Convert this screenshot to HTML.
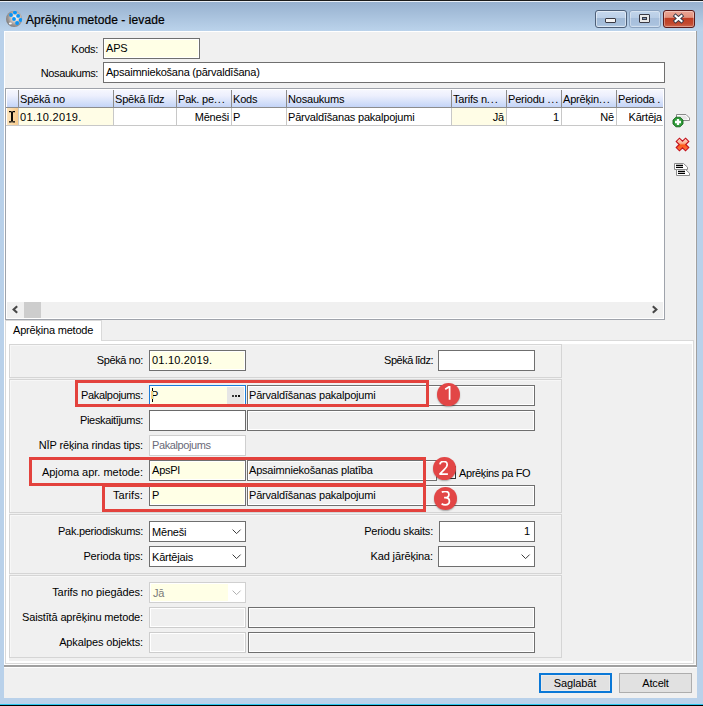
<!DOCTYPE html>
<html><head><meta charset="utf-8"><style>
*{margin:0;padding:0;box-sizing:border-box}
html,body{width:703px;height:706px;overflow:hidden}
body{position:relative;background:#b9d1ea;font-family:"Liberation Sans",sans-serif;font-size:11px;color:#000}
.a{position:absolute}
.t{position:absolute;white-space:pre;line-height:1}
</style></head><body>
<div class="a" style="left:0px;top:0px;width:703px;height:1px;background:#1a1a1a"></div>
<div class="a" style="left:0px;top:1px;width:703px;height:1px;background:#e9eff6"></div>
<div class="a" style="left:0px;top:2px;width:703px;height:29px;background:linear-gradient(#97b1cf,#bbd3eb)"></div>
<div class="a" style="left:0px;top:704px;width:703px;height:1px;background:#2cc6ee"></div>
<div class="a" style="left:0px;top:705px;width:703px;height:1px;background:#000"></div>
<svg class="a" style="left:6px;top:11px" width="17" height="17" viewBox="0 0 17 17">
<defs><radialGradient id="sg" cx="0.58" cy="0.42" r="0.62"><stop offset="0" stop-color="#ffffff"/><stop offset="0.35" stop-color="#ddd2cc"/><stop offset="0.7" stop-color="#a09a98"/><stop offset="1" stop-color="#7c7a7a"/></radialGradient>
<clipPath id="sc"><circle cx="8.1" cy="7.9" r="8.1"/></clipPath></defs>
<circle cx="8.1" cy="7.9" r="8.1" fill="url(#sg)"/>
<g fill="#0a94f6" clip-path="url(#sc)">
<circle cx="9" cy="1.6" r="1.95"/><circle cx="5" cy="4" r="1.95"/><circle cx="12.1" cy="4.9" r="1.95"/>
<circle cx="8" cy="8" r="1.95"/><circle cx="14.7" cy="9" r="1.95"/><circle cx="11.1" cy="12" r="1.95"/>
</g>
<ellipse cx="4.3" cy="12.4" rx="1.5" ry="1" fill="#fff" opacity="0.95"/>
</svg>
<div class="t" style="left:26px;top:13.84px;font-size:12px;letter-spacing:0.08px;color:#000;-webkit-text-stroke:0.2px #000">Aprēķinu metode - ievade</div>
<div class="a" style="left:595px;top:10px;width:32px;height:18px;border:1px solid #4d5f78;border-radius:3px;background:linear-gradient(#c6d8ee 0,#bcd0e8 41%,#a0b9d6 44%,#a6bfdb 85%,#bcd1e9 100%);box-shadow:inset 0 0 0 1px rgba(255,255,255,0.5)"></div>
<div class="a" style="left:629px;top:10px;width:32px;height:18px;border:1px solid #8ba2bf;border-radius:3px;background:linear-gradient(#c2d5eb 0,#b8cde6 41%,#a6bedb 44%,#aac2de 85%,#bdd2ea 100%);box-shadow:inset 0 0 0 1px rgba(255,255,255,0.35)"></div>
<div class="a" style="left:663px;top:10px;width:32px;height:18px;border:1px solid #5a1a1a;border-radius:3px;background:linear-gradient(#eba594 0,#e3937f 40%,#bf3c22 44%,#c24a30 80%,#d06a52 100%);box-shadow:inset 0 0 0 1px rgba(255,255,255,0.35)"></div>
<div class="a" style="left:605px;top:18px;width:11px;height:5px;background:#f4f4f4;border:1px solid #3a3a44;border-radius:1px"></div>
<div class="a" style="left:639px;top:14px;width:11px;height:9px;background:#e8e8e8;border:1px solid #3a3a44;border-radius:1px"></div>
<div class="a" style="left:642px;top:17px;width:5px;height:3px;background:#7d94b4;border:1px solid #3a3a44"></div>
<svg class="a" style="left:672px;top:13px" width="13" height="11" viewBox="0 0 13 11">
<path d="M3.6 3 L9.4 8 M9.4 3 L3.6 8" stroke="#3a3a48" stroke-width="4" stroke-linecap="square"/>
<path d="M3.6 3 L9.4 8 M9.4 3 L3.6 8" stroke="#fff" stroke-width="2.2" stroke-linecap="square"/>
</svg>
<div class="a" style="left:4px;top:31px;width:693px;height:667px;background:#f0f0f0"></div>
<div class="a" style="left:4px;top:31px;width:693px;height:1px;background:#fff"></div>
<div class="a" style="left:4px;top:31px;width:1px;height:636px;background:#fff"></div>
<div class="a" style="left:696px;top:31px;width:1px;height:636px;background:#a0a0a0"></div>
<div class="a" style="left:695px;top:32px;width:1px;height:633px;background:#f6f6f6"></div>
<div class="a" style="left:4px;top:665px;width:693px;height:2px;background:#a0a0a0"></div>
<div class="a" style="left:5px;top:664px;width:691px;height:1px;background:#fff"></div>
<div class="a" style="left:4px;top:667px;width:693px;height:1px;background:#fff"></div>
<div class="t" style="right:605px;top:43.69px;font-size:11px;letter-spacing:-0.3px;">Kods:</div>
<div class="t" style="right:605px;top:67.69px;font-size:11px;letter-spacing:-0.39px;">Nosaukums:</div>
<div class="a" style="left:103px;top:38px;width:97px;height:21px;border:1px solid #6f6f6f;background:#ffffe6;box-shadow:inset 0 0 0 1px #fff;"></div>
<div class="t" style="left:106px;top:42.69px;font-size:11px;letter-spacing:-0.2px;">APS</div>
<div class="a" style="left:103px;top:62px;width:562px;height:21px;border:1px solid #6f6f6f;background:#fff;box-shadow:inset 0 0 0 1px #fff;"></div>
<div class="t" style="left:106px;top:66.69px;font-size:11px;letter-spacing:-0.22px;">Apsaimniekošana (pārvaldīšana)</div>
<div class="a" style="left:5px;top:88px;width:660px;height:232px;background:#fff;border:1px solid #9fa3ab"></div>
<div class="a" style="left:7px;top:90px;width:656px;height:17px;background:linear-gradient(#f6f7fe 0%,#eceffd 35%,#d6e1fa 70%,#c4d4f7 100%)"></div>
<div class="a" style="left:6px;top:107px;width:657px;height:1px;background:#8c8c8c"></div>
<div class="a" style="left:7px;top:108px;width:11px;height:17px;background:linear-gradient(90deg,#fde6bf,#f7c98a)"></div>
<div class="a" style="left:6px;top:125px;width:657px;height:1px;background:#c8c8c8"></div>
<div class="a" style="left:18px;top:90px;width:1px;height:17px;background:#8c8c8c"></div>
<div class="a" style="left:18px;top:108px;width:1px;height:17px;background:#c8c8c8"></div>
<div class="a" style="left:113px;top:90px;width:1px;height:17px;background:#8c8c8c"></div>
<div class="a" style="left:113px;top:108px;width:1px;height:17px;background:#c8c8c8"></div>
<div class="a" style="left:176px;top:90px;width:1px;height:17px;background:#8c8c8c"></div>
<div class="a" style="left:176px;top:108px;width:1px;height:17px;background:#c8c8c8"></div>
<div class="a" style="left:231px;top:90px;width:1px;height:17px;background:#8c8c8c"></div>
<div class="a" style="left:231px;top:108px;width:1px;height:17px;background:#c8c8c8"></div>
<div class="a" style="left:286px;top:90px;width:1px;height:17px;background:#8c8c8c"></div>
<div class="a" style="left:286px;top:108px;width:1px;height:17px;background:#c8c8c8"></div>
<div class="a" style="left:451px;top:90px;width:1px;height:17px;background:#8c8c8c"></div>
<div class="a" style="left:451px;top:108px;width:1px;height:17px;background:#c8c8c8"></div>
<div class="a" style="left:506px;top:90px;width:1px;height:17px;background:#8c8c8c"></div>
<div class="a" style="left:506px;top:108px;width:1px;height:17px;background:#c8c8c8"></div>
<div class="a" style="left:561px;top:90px;width:1px;height:17px;background:#8c8c8c"></div>
<div class="a" style="left:561px;top:108px;width:1px;height:17px;background:#c8c8c8"></div>
<div class="a" style="left:616px;top:90px;width:1px;height:17px;background:#8c8c8c"></div>
<div class="a" style="left:616px;top:108px;width:1px;height:17px;background:#c8c8c8"></div>
<div class="a" style="left:19px;top:108px;width:94px;height:17px;background:#fffde6"></div>
<div class="a" style="left:452px;top:108px;width:54px;height:17px;background:#fffde6"></div>
<div class="t" style="left:20px;top:93.69px;font-size:11px;letter-spacing:-0.2px;">Spēkā no</div>
<div class="t" style="left:115px;top:93.69px;font-size:11px;letter-spacing:-0.2px;">Spēkā līdz</div>
<div class="t" style="left:178px;top:93.69px;font-size:11px;letter-spacing:-0.2px;">Pak. pe<span style="letter-spacing:0.9px">...</span></div>
<div class="t" style="left:233px;top:93.69px;font-size:11px;letter-spacing:-0.2px;">Kods</div>
<div class="t" style="left:288px;top:93.69px;font-size:11px;letter-spacing:-0.2px;">Nosaukums</div>
<div class="t" style="left:453px;top:93.69px;font-size:11px;letter-spacing:-0.2px;">Tarifs n<span style="letter-spacing:0.9px">...</span></div>
<div class="t" style="left:508px;top:93.69px;font-size:11px;letter-spacing:-0.2px;">Periodu <span style="letter-spacing:0.9px">...</span></div>
<div class="t" style="left:563px;top:93.69px;font-size:11px;letter-spacing:-0.2px;">Aprēķin<span style="letter-spacing:0.9px">...</span></div>
<div class="t" style="left:618px;top:93.69px;font-size:11px;letter-spacing:-0.2px;">Perioda .</div>
<div class="t" style="left:20px;top:111.69px;font-size:11px;letter-spacing:0.32px;">01.10.2019.</div>
<div class="t" style="right:474px;top:111.69px;font-size:11px;letter-spacing:-0.2px;">Mēneši</div>
<div class="t" style="left:233px;top:111.69px;font-size:11px;letter-spacing:-0.2px;">P</div>
<div class="t" style="left:288px;top:111.69px;font-size:11px;letter-spacing:-0.2px;">Pārvaldīšanas pakalpojumi</div>
<div class="t" style="right:199px;top:111.69px;font-size:11px;letter-spacing:-0.2px;">Jā</div>
<div class="t" style="right:144px;top:111.69px;font-size:11px;letter-spacing:-0.2px;">1</div>
<div class="t" style="right:89px;top:111.69px;font-size:11px;letter-spacing:-0.2px;">Nē</div>
<div class="t" style="right:41px;top:111.69px;font-size:11px;letter-spacing:-0.2px;overflow:hidden">Kārtēja</div>
<svg class="a" style="left:8px;top:110px" width="9" height="14" viewBox="0 0 9 14">
<path d="M1 1.6 H3.6 M4.4 1.6 H7 M1 11.9 H3.6 M4.4 11.9 H7" stroke="#000" stroke-width="1.1" fill="none"/>
<path d="M4 2 V11.5" stroke="#000" stroke-width="1.9" fill="none"/></svg>
<div class="a" style="left:7px;top:302px;width:656px;height:16px;background:#f0f0f0"></div>
<div class="a" style="left:24px;top:302px;width:17px;height:16px;background:#cdcdcd"></div>
<svg class="a" style="left:11px;top:305px" width="9" height="9" viewBox="0 0 9 9"><path d="M6.2 1.2 L2.6 4.5 L6.2 7.8" stroke="#474747" stroke-width="2.1" fill="none"/></svg>
<svg class="a" style="left:650px;top:305px" width="9" height="9" viewBox="0 0 9 9"><path d="M2.8 1.2 L6.4 4.5 L2.8 7.8" stroke="#474747" stroke-width="2.1" fill="none"/></svg>
<svg class="a" style="left:672px;top:112px" width="20" height="16" viewBox="0 0 20 16">
<path d="M4.5 2.5 H14 L17.5 6 V8.5 H4.5 Z" fill="#fff" stroke="#8a8a8a"/>
<path d="M8 3.5 H13 L15.5 6 V7.5 H8 Z" fill="#e6e6e6"/>
<path d="M3.9 5.2 H8.1 L11 8.1 V11.9 L8.1 14.8 H3.9 L1 11.9 V8.1 Z" fill="#2e9a38" stroke="#17661e" stroke-width="0.9"/>
<path d="M6 7 V13 M3 10 H9" stroke="#fff" stroke-width="2.3"/>
</svg>
<svg class="a" style="left:674.7px;top:137px" width="15" height="15" viewBox="0 0 15 15">
<defs><linearGradient id="xg" gradientUnits="userSpaceOnUse" x1="7.5" y1="1" x2="7.5" y2="14" gradientTransform="rotate(-45 7.5 7.5)"><stop offset="0" stop-color="#ffe4d8"/><stop offset="0.4" stop-color="#fcb090"/><stop offset="0.55" stop-color="#ff5a14"/><stop offset="1" stop-color="#f87a50"/></linearGradient></defs>
<g transform="rotate(45 7.5 7.5)"><path d="M5.2 0.9 H9.8 V5.2 H14.1 V9.8 H9.8 V14.1 H5.2 V9.8 H0.9 V5.2 H5.2 Z" fill="url(#xg)" stroke="#c4101a" stroke-width="1.1" stroke-linejoin="miter"/></g>
</svg>
<svg class="a" style="left:673px;top:162px" width="18" height="15" viewBox="0 0 18 15">
<path d="M1.5 1.5 H10.5 L14.5 5.2 V7.5 H1.5 Z" fill="#fff" stroke="#8a8a8a"/>
<path d="M3 3.4 H10 M3 5.4 H10" stroke="#000" stroke-width="1.2"/>
<path d="M3.5 7.5 H12.5 L16.5 11.2 V13.5 H3.5 Z" fill="#fff" stroke="#8a8a8a"/>
<path d="M5 9.4 H12 M5 11.4 H12" stroke="#000" stroke-width="1.2"/>
</svg>
<div class="a" style="left:5px;top:320px;width:97px;height:21px;background:#fff;border:1px solid #d9d9d9;border-bottom:none"></div>
<div class="t" style="left:13px;top:324.69px;font-size:11px;letter-spacing:-0.2px;">Aprēķina metode</div>
<div class="a" style="left:5px;top:340px;width:689px;height:324px;background:#fff;border:1px solid #d9d9d9"></div>
<div class="a" style="left:9px;top:344px;width:683px;height:317px;background:#f0f0f0"></div>
<div class="a" style="left:6px;top:340px;width:95px;height:1px;background:#fff"></div>
<div class="a" style="left:9px;top:344px;width:553px;height:34px;border:1px solid #d5d5d5;box-shadow:inset 1px 1px 0 #f7f7f7"></div>
<div class="a" style="left:9px;top:379px;width:553px;height:134px;border:1px solid #d5d5d5;box-shadow:inset 1px 1px 0 #f7f7f7"></div>
<div class="a" style="left:9px;top:514px;width:553px;height:60px;border:1px solid #d5d5d5;box-shadow:inset 1px 1px 0 #f7f7f7"></div>
<div class="a" style="left:9px;top:575px;width:553px;height:83px;border:1px solid #d5d5d5;box-shadow:inset 1px 1px 0 #f7f7f7"></div>
<div class="t" style="right:560px;top:354.69px;font-size:11px;letter-spacing:-0.37px;">Spēkā no:</div>
<div class="a" style="left:149px;top:350px;width:97px;height:21px;border:1px solid #6f6f6f;background:#ffffe6;box-shadow:inset 0 0 0 1px #fff;"></div>
<div class="t" style="left:152px;top:354.69px;font-size:11px;letter-spacing:0.2px;">01.10.2019.</div>
<div class="t" style="right:270px;top:354.69px;font-size:11px;letter-spacing:-0.5px;">Spēkā līdz:</div>
<div class="a" style="left:438px;top:350px;width:97px;height:21px;border:1px solid #6f6f6f;background:#fff;box-shadow:inset 0 0 0 1px #fff;"></div>
<div class="t" style="right:560px;top:389.69px;font-size:11px;letter-spacing:-0.34px;">Pakalpojums:</div>
<div class="a" style="left:149px;top:385px;width:97px;height:21px;border:1px solid #1a7ad8;background:#ffffe6;box-shadow:inset 0 0 0 1px #fff;"></div>
<div class="a" style="left:227px;top:387px;width:17px;height:17px;background:#e6e6e6"></div>
<div class="a" style="left:232px;top:395px;width:2px;height:2px;background:#3a3a3a"></div>
<div class="a" style="left:235px;top:395px;width:2px;height:2px;background:#2a2a2a"></div>
<div class="a" style="left:238px;top:395px;width:2px;height:2px;background:#111"></div>
<div class="a" style="left:247px;top:385px;width:288px;height:21px;border:1px solid #6f6f6f;background:#f0f0f0;box-shadow:inset 0 0 0 1px #fff;"></div>
<div class="t" style="left:249px;top:389.69px;font-size:11px;letter-spacing:-0.2px;">Pārvaldīšanas pakalpojumi</div>
<div class="t" style="left:151px;top:389.69px;font-size:11px;letter-spacing:-0.2px;">P</div>
<div class="a" style="left:152px;top:388px;width:1px;height:3px;background:#000"></div>
<div class="a" style="left:152px;top:391px;width:1px;height:8px;background:#f3cf78"></div>
<div class="a" style="left:152px;top:399px;width:1px;height:3px;background:#000"></div>
<div class="t" style="right:560px;top:414.69px;font-size:11px;letter-spacing:-0.35px;">Pieskaitījums:</div>
<div class="a" style="left:149px;top:410px;width:97px;height:21px;border:1px solid #6a6a6a;background:#fff;box-shadow:inset 0 0 0 1px #fff;"></div>
<div class="a" style="left:247px;top:410px;width:288px;height:21px;border:1px solid #6f6f6f;background:#f0f0f0;box-shadow:inset 0 0 0 1px #fff;"></div>
<div class="t" style="right:560px;top:439.69px;font-size:11px;letter-spacing:-0.14px;">NĪP rēķina rindas tips:</div>
<div class="a" style="left:149px;top:435px;width:97px;height:21px;border:1px solid #cfcfcf;background:#fff;box-shadow:inset 0 0 0 1px #fff;"></div>
<div class="t" style="left:152px;top:439.69px;font-size:11px;letter-spacing:-0.4px;color:#6a6a78">Pakalpojums</div>
<div class="t" style="right:560px;top:466.69px;font-size:11px;letter-spacing:-0.02px;">Apjoma apr. metode:</div>
<div class="a" style="left:149px;top:460px;width:97px;height:21px;border:1px solid #6f6f6f;background:#ffffe6;box-shadow:inset 0 0 0 1px #fff;"></div>
<div class="t" style="left:152px;top:464.69px;font-size:11px;letter-spacing:-0.2px;">ApsPl</div>
<div class="a" style="left:247px;top:460px;width:190px;height:21px;border:1px solid #6f6f6f;background:#f0f0f0;box-shadow:inset 0 0 0 1px #fff;"></div>
<div class="t" style="left:249px;top:464.69px;font-size:11px;letter-spacing:-0.2px;">Apsaimniekošanas platība</div>
<div class="a" style="left:443px;top:466px;width:13px;height:13px;border:1px solid #333;background:#fff"></div>
<div class="t" style="left:459px;top:467.69px;font-size:11px;letter-spacing:-0.37px;">Aprēķins pa FO</div>
<div class="t" style="right:560px;top:489.69px;font-size:11px;letter-spacing:0.1px;">Tarifs:</div>
<div class="a" style="left:149px;top:485px;width:97px;height:21px;border:1px solid #6f6f6f;background:#ffffe6;box-shadow:inset 0 0 0 1px #fff;"></div>
<div class="t" style="left:152px;top:489.69px;font-size:11px;letter-spacing:-0.2px;">P</div>
<div class="a" style="left:247px;top:485px;width:288px;height:21px;border:1px solid #6f6f6f;background:#f0f0f0;box-shadow:inset 0 0 0 1px #fff;"></div>
<div class="t" style="left:249px;top:489.69px;font-size:11px;letter-spacing:-0.2px;">Pārvaldīšanas pakalpojumi</div>
<div class="t" style="right:560px;top:525.69px;font-size:11px;letter-spacing:-0.29px;">Pak.periodiskums:</div>
<div class="a" style="left:149px;top:521px;width:97px;height:21px;border:1px solid #6f6f6f;background:#fff;box-shadow:inset 0 0 0 1px #fff;"></div>
<div class="t" style="left:152px;top:526.69px;font-size:11px;letter-spacing:-0.2px;">Mēneši</div>
<svg class="a" style="left:232px;top:529px" width="10" height="6" viewBox="0 0 10 6"><path d="M0.6 0.6 L4.6 4.6 L8.6 0.6" stroke="#3a3a3a" stroke-width="1" fill="none"/></svg>
<div class="t" style="right:270px;top:525.69px;font-size:11px;letter-spacing:-0.22px;">Periodu skaits:</div>
<div class="a" style="left:439px;top:521px;width:96px;height:21px;border:1px solid #6f6f6f;background:#fff;box-shadow:inset 0 0 0 1px #fff;"></div>
<div class="t" style="right:173px;top:525.69px;font-size:11px;letter-spacing:-0.2px;">1</div>
<div class="t" style="right:560px;top:550.69px;font-size:11px;letter-spacing:-0.12px;">Perioda tips:</div>
<div class="a" style="left:149px;top:546px;width:97px;height:21px;border:1px solid #6f6f6f;background:#fff;box-shadow:inset 0 0 0 1px #fff;"></div>
<div class="t" style="left:152px;top:551.69px;font-size:11px;letter-spacing:-0.2px;">Kārtējais</div>
<svg class="a" style="left:232px;top:554px" width="10" height="6" viewBox="0 0 10 6"><path d="M0.6 0.6 L4.6 4.6 L8.6 0.6" stroke="#3a3a3a" stroke-width="1" fill="none"/></svg>
<div class="t" style="right:270px;top:550.69px;font-size:11px;letter-spacing:-0.13px;">Kad jārēķina:</div>
<div class="a" style="left:438px;top:546px;width:97px;height:21px;border:1px solid #6f6f6f;background:#fff;box-shadow:inset 0 0 0 1px #fff;"></div>
<svg class="a" style="left:521px;top:554px" width="10" height="6" viewBox="0 0 10 6"><path d="M0.6 0.6 L4.6 4.6 L8.6 0.6" stroke="#3a3a3a" stroke-width="1" fill="none"/></svg>
<div class="t" style="right:560px;top:586.69px;font-size:11px;letter-spacing:-0.08px;">Tarifs no piegādes:</div>
<div class="a" style="left:149px;top:582px;width:97px;height:21px;border:1px solid #d0d0d0;background:#fff;box-shadow:inset 0 0 0 1px #fff;"></div>
<div class="a" style="left:151px;top:584px;width:77px;height:17px;background:#ffffe6"></div>
<div class="t" style="left:153px;top:587.69px;font-size:11px;letter-spacing:-0.2px;color:#7a7a7a">Jā</div>
<svg class="a" style="left:232px;top:590px" width="10" height="6" viewBox="0 0 10 6"><path d="M0.6 0.6 L4.6 4.6 L8.6 0.6" stroke="#b0b0b0" stroke-width="1" fill="none"/></svg>
<div class="t" style="right:560px;top:611.69px;font-size:11px;letter-spacing:-0.15px;">Saistītā aprēķinu metode:</div>
<div class="a" style="left:149px;top:607px;width:97px;height:21px;border:1px solid #cdcdcd;background:#f0f0f0;box-shadow:inset 0 0 0 1px #fff;"></div>
<div class="a" style="left:248px;top:607px;width:287px;height:21px;border:1px solid #6f6f6f;background:#f0f0f0;box-shadow:inset 0 0 0 1px #fff;"></div>
<div class="t" style="right:560px;top:636.69px;font-size:11px;letter-spacing:-0.14px;">Apkalpes objekts:</div>
<div class="a" style="left:149px;top:632px;width:97px;height:21px;border:1px solid #cdcdcd;background:#f0f0f0;box-shadow:inset 0 0 0 1px #fff;"></div>
<div class="a" style="left:248px;top:632px;width:287px;height:21px;border:1px solid #6f6f6f;background:#f0f0f0;box-shadow:inset 0 0 0 1px #fff;"></div>
<div class="a" style="left:75px;top:380px;width:354px;height:27px;border:3px solid #e3423d"></div>
<div class="a" style="left:29px;top:457px;width:397px;height:29px;border:3px solid #e3423d"></div>
<div class="a" style="left:102px;top:484px;width:324px;height:28px;border:3px solid #e3423d"></div>
<div class="a" style="left:436.5px;top:382.5px;width:23.8px;height:23.8px;border-radius:50%;background:#e24646;box-shadow:0 1px 1.5px rgba(0,0,0,0.3)"></div>
<svg class="a" style="left:444px;top:386px" width="10" height="15" viewBox="0 0 10 15"><path d="M1.2 3.2 L5.6 0.4 V13.8" stroke="#fff" stroke-width="1.75" fill="none" stroke-linejoin="round"/></svg>
<div class="a" style="left:432.6px;top:456.6px;width:23.8px;height:23.8px;border-radius:50%;background:#e24646;box-shadow:0 1px 1.5px rgba(0,0,0,0.3)"></div>
<svg class="a" style="left:439px;top:461px" width="10" height="15" viewBox="0 0 10 15"><path d="M0.9 3.4 C1.2 1.4 2.7 0.4 4.6 0.4 C6.8 0.4 8.2 1.8 8.2 3.7 C8.2 5.6 7.1 6.9 5.4 8.4 L1.0 12.8 V13.0 H8.9" stroke="#fff" stroke-width="1.75" fill="none" stroke-linejoin="round"/></svg>
<div class="a" style="left:433.6px;top:486.70000000000005px;width:23.8px;height:23.8px;border-radius:50%;background:#e24646;box-shadow:0 1px 1.5px rgba(0,0,0,0.3)"></div>
<svg class="a" style="left:440.5px;top:490.5px" width="10" height="15" viewBox="0 0 10 15"><path d="M0.9 1.4 C1.8 0.7 2.9 0.4 4.2 0.4 C6.5 0.4 7.9 1.7 7.9 3.5 C7.9 5.5 6.4 6.7 4.2 6.7 H3.1 M4.2 6.7 C6.9 6.7 8.4 8.1 8.4 10.2 C8.4 12.4 6.7 13.8 4.2 13.8 C2.8 13.8 1.6 13.4 0.6 12.7" stroke="#fff" stroke-width="1.75" fill="none" stroke-linejoin="round"/></svg>
<div class="a" style="left:539px;top:673px;width:73px;height:20px;background:#e1e1e1;border:2px solid #0a78d7;box-shadow:inset 0 0 0 1px #eaeaea"></div>
<div class="t" style="left:375px;width:400px;text-align:center;top:677.69px;font-size:11px;letter-spacing:-0.1px;">Saglabāt</div>
<div class="a" style="left:619px;top:673px;width:73px;height:20px;background:#e1e1e1;border:1px solid #adadad"></div>
<div class="t" style="left:455.5px;width:400px;text-align:center;top:677.69px;font-size:11px;letter-spacing:-0.2px;">Atcelt</div>
</body></html>
